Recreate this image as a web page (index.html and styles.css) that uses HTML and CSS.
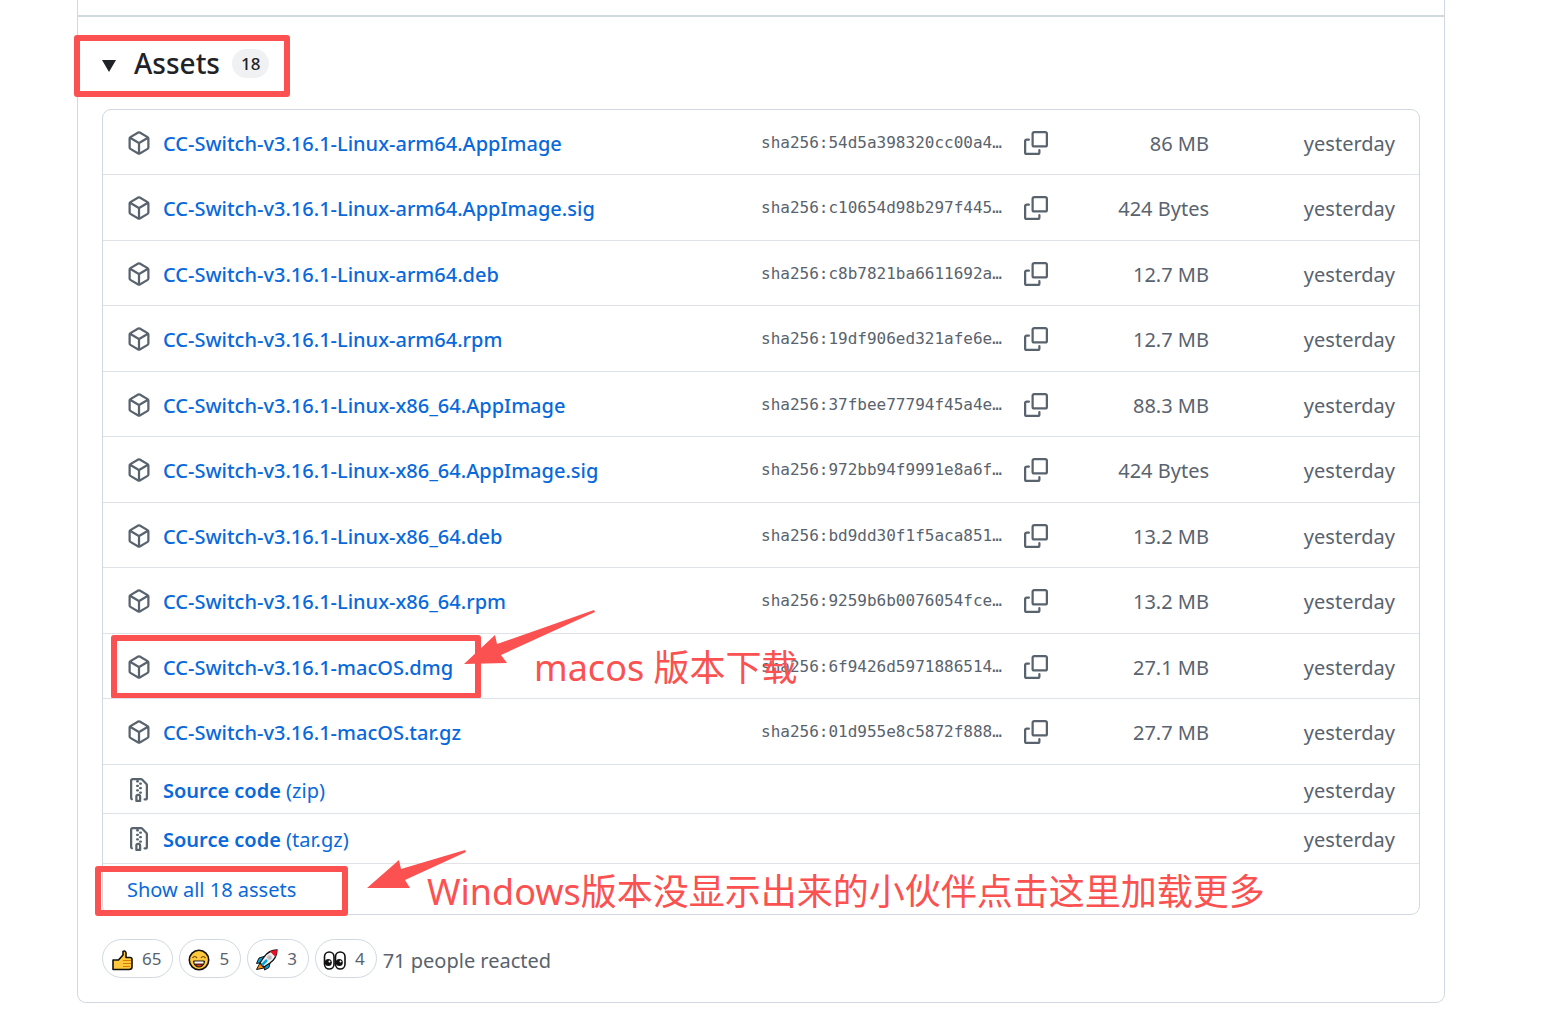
FILE: index.html
```html
<!DOCTYPE html>
<html lang="en">
<head>
  <meta charset="UTF-8" />
  <meta name="viewport" content="width=device-width, initial-scale=1.0"/>
  <title>Release assets</title>
  <link rel="stylesheet" href="styles.css">
</head>
<body>
  <!-- Shared icons -->
  <svg class="sprite" aria-hidden="true">
    <symbol id="icon-package" viewBox="0 0 16 16">
      <path d="M8.878.392l5.25 3.045c.54.314.872.89.872 1.514v6.098a1.75 1.75 0 0 1-.872 1.514l-5.25 3.045a1.75 1.75 0 0 1-1.756 0l-5.25-3.045A1.75 1.75 0 0 1 1 11.049V4.951c0-.624.332-1.201.872-1.514L7.122.392a1.75 1.75 0 0 1 1.756 0ZM7.875 1.69l-4.63 2.685L8 7.133l4.755-2.758-4.63-2.685a.248.248 0 0 0-.25 0ZM2.5 5.677v5.372c0 .09.047.171.125.216l4.625 2.683V8.432Zm6.25 8.271 4.625-2.683a.25.25 0 0 0 .125-.216V5.677L8.75 8.432Z"/>
    </symbol>
    <symbol id="icon-copy" viewBox="0 0 16 16">
      <path d="M0 6.75C0 5.784.784 5 1.75 5h1.5a.75.75 0 0 1 0 1.5h-1.5a.25.25 0 0 0-.25.25v7.5c0 .138.112.25.25.25h7.5a.25.25 0 0 0 .25-.25v-1.5a.75.75 0 0 1 1.5 0v1.5A1.75 1.75 0 0 1 9.25 16h-7.5A1.75 1.75 0 0 1 0 14.25Z"/>
      <path d="M5 1.75C5 .784 5.784 0 6.75 0h7.5C15.216 0 16 .784 16 1.75v7.5A1.75 1.75 0 0 1 14.25 11h-7.5A1.75 1.75 0 0 1 5 9.25Zm1.75-.25a.25.25 0 0 0-.25.25v7.5c0 .138.112.25.25.25h7.5a.25.25 0 0 0 .25-.25v-7.5a.25.25 0 0 0-.25-.25Z"/>
    </symbol>
    <symbol id="icon-zip" viewBox="0 0 16 16">
      <path d="M3.5 1.75v11.5c0 .09.048.173.126.217a.75.75 0 0 1-.752 1.298A1.748 1.748 0 0 1 2 13.25V1.75C2 .784 2.784 0 3.75 0h5.586c.464 0 .909.185 1.237.513l2.914 2.914c.329.328.513.773.513 1.237v8.586A1.75 1.75 0 0 1 12.25 15h-.5a.75.75 0 0 1 0-1.5h.5a.25.25 0 0 0 .25-.25V4.664a.25.25 0 0 0-.073-.177L9.513 1.573a.25.25 0 0 0-.177-.073H7.25a.75.75 0 0 1 0 1.5h-.5a.75.75 0 0 1 0-1.5h-3a.25.25 0 0 0-.25.25Zm3.75 8.75h.5c.966 0 1.75.784 1.75 1.75v3a.75.75 0 0 1-.75.75h-2.5a.75.75 0 0 1-.75-.75v-3c0-.966.784-1.75 1.75-1.75ZM6 5.25a.75.75 0 0 1 .75-.75h.5a.75.75 0 0 1 0 1.5h-.5A.75.75 0 0 1 6 5.25Zm.75 2.25h.5a.75.75 0 0 1 0 1.5h-.5a.75.75 0 0 1 0-1.5ZM8 6.75A.75.75 0 0 1 8.75 6h.5a.75.75 0 0 1 0 1.5h-.5A.75.75 0 0 1 8 6.75ZM8.75 3h.5a.75.75 0 0 1 0 1.5h-.5a.75.75 0 0 1 0-1.5ZM8 9.75A.75.75 0 0 1 8.75 9h.5a.75.75 0 0 1 0 1.5h-.5A.75.75 0 0 1 8 9.75Zm-1 2.5v2.25h1v-2.25a.25.25 0 0 0-.25-.25h-.5a.25.25 0 0 0-.25.25Z"/>
    </symbol>
  </svg>

  <main class="release">
    <details class="assets" open>
      <summary class="assets-summary">
        <svg class="caret" viewBox="0 0 14 12" aria-hidden="true"><path d="M0 0h14L7 12z"/></svg>
        <span class="assets-title">Assets</span>
        <span class="counter">18</span>
        <span class="mark mark-summary"></span>
      </summary>

      <ul class="asset-list">
        <li class="asset">
          <svg class="icon"><use href="#icon-package"/></svg>
          <a class="asset-name" href="#">CC-Switch-v3.16.1-Linux-arm64.AppImage</a>
          <span class="digest">sha256:54d5a398320cc00a4…</span>
          <button class="copy" type="button" aria-label="Copy"><svg class="icon"><use href="#icon-copy"/></svg></button>
          <span class="size">86 MB</span>
          <span class="date">yesterday</span>
        </li>
        <li class="asset">
          <svg class="icon"><use href="#icon-package"/></svg>
          <a class="asset-name" href="#">CC-Switch-v3.16.1-Linux-arm64.AppImage.sig</a>
          <span class="digest">sha256:c10654d98b297f445…</span>
          <button class="copy" type="button" aria-label="Copy"><svg class="icon"><use href="#icon-copy"/></svg></button>
          <span class="size">424 Bytes</span>
          <span class="date">yesterday</span>
        </li>
        <li class="asset">
          <svg class="icon"><use href="#icon-package"/></svg>
          <a class="asset-name" href="#">CC-Switch-v3.16.1-Linux-arm64.deb</a>
          <span class="digest">sha256:c8b7821ba6611692a…</span>
          <button class="copy" type="button" aria-label="Copy"><svg class="icon"><use href="#icon-copy"/></svg></button>
          <span class="size">12.7 MB</span>
          <span class="date">yesterday</span>
        </li>
        <li class="asset">
          <svg class="icon"><use href="#icon-package"/></svg>
          <a class="asset-name" href="#">CC-Switch-v3.16.1-Linux-arm64.rpm</a>
          <span class="digest">sha256:19df906ed321afe6e…</span>
          <button class="copy" type="button" aria-label="Copy"><svg class="icon"><use href="#icon-copy"/></svg></button>
          <span class="size">12.7 MB</span>
          <span class="date">yesterday</span>
        </li>
        <li class="asset">
          <svg class="icon"><use href="#icon-package"/></svg>
          <a class="asset-name" href="#">CC-Switch-v3.16.1-Linux-x86_64.AppImage</a>
          <span class="digest">sha256:37fbee77794f45a4e…</span>
          <button class="copy" type="button" aria-label="Copy"><svg class="icon"><use href="#icon-copy"/></svg></button>
          <span class="size">88.3 MB</span>
          <span class="date">yesterday</span>
        </li>
        <li class="asset">
          <svg class="icon"><use href="#icon-package"/></svg>
          <a class="asset-name" href="#">CC-Switch-v3.16.1-Linux-x86_64.AppImage.sig</a>
          <span class="digest">sha256:972bb94f9991e8a6f…</span>
          <button class="copy" type="button" aria-label="Copy"><svg class="icon"><use href="#icon-copy"/></svg></button>
          <span class="size">424 Bytes</span>
          <span class="date">yesterday</span>
        </li>
        <li class="asset">
          <svg class="icon"><use href="#icon-package"/></svg>
          <a class="asset-name" href="#">CC-Switch-v3.16.1-Linux-x86_64.deb</a>
          <span class="digest">sha256:bd9dd30f1f5aca851…</span>
          <button class="copy" type="button" aria-label="Copy"><svg class="icon"><use href="#icon-copy"/></svg></button>
          <span class="size">13.2 MB</span>
          <span class="date">yesterday</span>
        </li>
        <li class="asset">
          <svg class="icon"><use href="#icon-package"/></svg>
          <a class="asset-name" href="#">CC-Switch-v3.16.1-Linux-x86_64.rpm</a>
          <span class="digest">sha256:9259b6b0076054fce…</span>
          <button class="copy" type="button" aria-label="Copy"><svg class="icon"><use href="#icon-copy"/></svg></button>
          <span class="size">13.2 MB</span>
          <span class="date">yesterday</span>
        </li>
        <li class="asset">
          <svg class="icon"><use href="#icon-package"/></svg>
          <a class="asset-name" href="#">CC-Switch-v3.16.1-macOS.dmg</a>
          <span class="digest">sha256:6f9426d5971886514…</span>
          <button class="copy" type="button" aria-label="Copy"><svg class="icon"><use href="#icon-copy"/></svg></button>
          <span class="size">27.1 MB</span>
          <span class="date">yesterday</span>
          <span class="mark mark-macos"></span>
          <svg class="arrow arrow-macos" viewBox="0 0 131 55" aria-hidden="true"><path d="M0 54 31 25l2 9L130 0l1 2-94 43 6 8z"/></svg>
          <span class="note note-macos" lang="zh-CN">macos 版本下载</span>
        </li>
        <li class="asset">
          <svg class="icon"><use href="#icon-package"/></svg>
          <a class="asset-name" href="#">CC-Switch-v3.16.1-macOS.tar.gz</a>
          <span class="digest">sha256:01d955e8c5872f888…</span>
          <button class="copy" type="button" aria-label="Copy"><svg class="icon"><use href="#icon-copy"/></svg></button>
          <span class="size">27.7 MB</span>
          <span class="date">yesterday</span>
        </li>
        <li class="asset asset-source">
          <svg class="icon"><use href="#icon-zip"/></svg>
          <a class="asset-name" href="#"><strong>Source code</strong> (zip)</a>
          <span class="date">yesterday</span>
        </li>
        <li class="asset asset-source">
          <svg class="icon"><use href="#icon-zip"/></svg>
          <a class="asset-name" href="#"><strong>Source code</strong> (tar.gz)</a>
          <span class="date">yesterday</span>
        </li>
        <li class="asset asset-more">
          <button class="show-all" type="button">Show all 18 assets</button>
          <span class="mark mark-more"></span>
          <svg class="arrow arrow-more" viewBox="0 0 99 39" aria-hidden="true"><path d="M0 38 32 10l2 9L98 0l1 2-61 28 5 8z"/></svg>
          <span class="note note-more" lang="zh-CN">Windows版本没显示出来的小伙伴点击这里加载更多</span>
        </li>
      </ul>
    </details>

    <div class="reactions">
      <button class="reaction" type="button" aria-label="65 thumbs up">
        <svg class="emoji" viewBox="0 0 24 24" aria-hidden="true">
          <path d="M3 13h5.500l4.500-5V4.500Q15.500 3 16 6v4.500h4q2 0 2 2v7.500q0 2.500-3 2.500H3z" fill="#ffc83d" stroke="#111" stroke-width="1.600" stroke-linejoin="round"/>
          <path d="M13 13.500h8M13 16.500h8M13 19.500h7" stroke="#d67d00" fill="none"/>
        </svg>
        65
      </button>
      <button class="reaction" type="button" aria-label="5 laugh">
        <svg class="emoji" viewBox="0 0 24 24" aria-hidden="true">
          <circle cx="12" cy="13" r="9.700" fill="#ffc83d" stroke="#111" stroke-width="1.600"/>
          <path d="M5.500 11q2-3 4.500 0M14 11q2-3 4.500 0" fill="none" stroke="#6b4300" stroke-width="1.200"/>
          <path d="M6.500 14h11q-.5 6-5.500 6t-5.500-6z" fill="#5a2412" stroke="#111"/>
          <path d="M7.500 14.500h9v2h-9z" fill="#fff"/>
          <path d="M9.500 18.800q2.500-2 5 0-2.500 1.400-5 0z" fill="#f03a17"/>
        </svg>
        5
      </button>
      <button class="reaction" type="button" aria-label="3 rocket">
        <svg class="emoji" viewBox="0 0 24 24" aria-hidden="true">
          <path d="M5 16l-3.500 6.500L9 21z" fill="#ff8c00" stroke="#111"/>
          <path d="M9 9.500l-5 1.500-2.500 5.500 5-1zM15 16l-1 4.500-4.500 2.500.5-5z" fill="#00a5e0" stroke="#111"/>
          <path d="M22 3q-8 0-13 7l-4 6 4 4 6-4q7-5 7-13z" fill="#eee" stroke="#111" stroke-width="1.300"/>
          <path d="M22 3q-4 0-7 1.500l5.500 5.500Q22 7 22 3z" fill="#e81224"/>
          <circle cx="14.500" cy="10.500" r="2.300" fill="#bbb"/>
          <path d="M7 18l5-5" stroke="#00a5e0" stroke-width="2.500"/>
        </svg>
        3
      </button>
      <button class="reaction" type="button" aria-label="4 eyes">
        <svg class="emoji" viewBox="0 0 24 24" aria-hidden="true">
          <rect x="1.500" y="5" width="9.500" height="17" rx="4.750" fill="#fff" stroke="#111" stroke-width="1.600"/>
          <rect x="12.500" y="5" width="9.500" height="17" rx="4.750" fill="#fff" stroke="#111" stroke-width="1.600"/>
          <circle cx="5.300" cy="15.500" r="3.500" fill="#111"/>
          <circle cx="16.300" cy="15.500" r="3.500" fill="#111"/>
          <circle cx="6.500" cy="14.500" r="1" fill="#fff"/>
          <circle cx="17.500" cy="14.500" r="1" fill="#fff"/>
        </svg>
        4
      </button>
      <span class="reacted">71 people reacted</span>
    </div>
  </main>
</body>
</html>
```
FILE: styles.css
```css
* {
  box-sizing: border-box;
}

body {
  margin: 0;
  padding: 0 120px 17px 77px;
  background: #fff;
  color: #1f2328;
  font-family: "Noto Sans", "Noto Sans CJK SC", sans-serif;
  font-size: 20px;
  line-height: 30px;
}

button {
  padding: 0;
  border: 0;
  background: none;
  font: inherit;
  cursor: pointer;
}

a {
  color: #0969da;
  text-decoration: none;
}

.sprite {
  display: none;
}

.release {
  padding: 15px 24px 24px;
  border: 1px solid #d1d9e0;
  border-top: 0;
  border-radius: 0 0 9px 9px;
}

.assets {
  margin: 0 -24px;
  padding: 0 24px;
  border-top: 2px solid #d1d9e0;
}

.assets-summary {
  position: relative;
  display: flex;
  align-items: center;
  height: 92px;
  list-style: none;
  cursor: pointer;
}

.caret {
  width: 14px;
  height: 12px;
  margin-top: 6px;
  margin-right: 18px;
  fill: #1f2328;
}

.assets-title {
  font-size: 28px;
  font-weight: 500;
}

.counter {
  margin-left: 12px;
  padding: 0 9px;
  border-radius: 15px;
  background: #eff1f3;
  font-size: 17px;
  font-weight: 500;
  line-height: 29px;
}

.asset-list {
  margin: 0;
  padding: 0;
  list-style: none;
  border: 1px solid #d1d9e0;
  border-radius: 9px;
}

.asset {
  position: relative;
  display: flex;
  align-items: center;
  padding: 17px 24px 15px;
}

.asset:nth-child(even) {
  padding-bottom: 16px;
}

.asset + .asset {
  border-top: 1px solid #dfe3e8;
}

.asset-source {
  padding-top: 9px;
  padding-bottom: 7px;
}

.asset-source:nth-child(even) {
  padding-bottom: 8px;
}

.asset-more {
  padding-top: 9px;
  padding-bottom: 9px;
}

.icon {
  display: block;
  flex: none;
  width: 24px;
  height: 24px;
  fill: #59636e;
}

.asset-name,
.size,
.date,
.show-all {
  padding-top: 2px;
}

.asset-name {
  flex: 1;
  margin-left: 12px;
  font-weight: 500;
}

.asset-source .asset-name {
  font-weight: 400;
}

.asset-source strong {
  font-weight: 600;
}

.digest {
  width: 263px;
  color: #59636e;
  font-family: "DejaVu Sans Mono", monospace;
  font-size: 16px;
}

.copy {
  flex: none;
}

.size,
.date {
  color: #59636e;
  text-align: right;
}

.size {
  width: 161px;
}

.date {
  width: 186px;
}

.show-all {
  color: #0969da;
}

.reactions {
  display: flex;
  align-items: center;
  gap: 6px;
  margin-top: 24px;
}

.reaction {
  display: flex;
  align-items: center;
  gap: 8px;
  height: 39px;
  padding: 0 11px 0 7px;
  border: 1px solid #d1d9e0;
  border-radius: 20px;
  color: #59636e;
  font-size: 17px;
}

.emoji {
  width: 24px;
  height: 24px;
}

.reacted {
  padding-top: 4px;
  color: #59636e;
}

/* Red annotations drawn over the list */
.mark,
.arrow,
.note {
  position: absolute;
  pointer-events: none;
}

.mark {
  border: 6px solid #fb5151;
  border-radius: 3px;
}

.mark-summary {
  top: 18px;
  left: -28px;
  width: 216px;
  height: 62px;
}

.mark-macos {
  top: 1px;
  left: 8px;
  width: 370px;
  height: 64px;
}

.mark-more {
  top: 2px;
  left: -8px;
  width: 253px;
  height: 50px;
}

.arrow {
  fill: #fb5151;
}

.arrow-macos {
  top: -24px;
  left: 361px;
  width: 131px;
  height: 55px;
}

.arrow-more {
  top: -14px;
  left: 264px;
  width: 99px;
  height: 39px;
}

.note {
  color: #fb5151;
  font-size: 36px;
  line-height: 48px;
  white-space: nowrap;
}

.note-macos {
  top: 10px;
  left: 431px;
}

.note-more {
  top: 4px;
  left: 324px;
}
```
